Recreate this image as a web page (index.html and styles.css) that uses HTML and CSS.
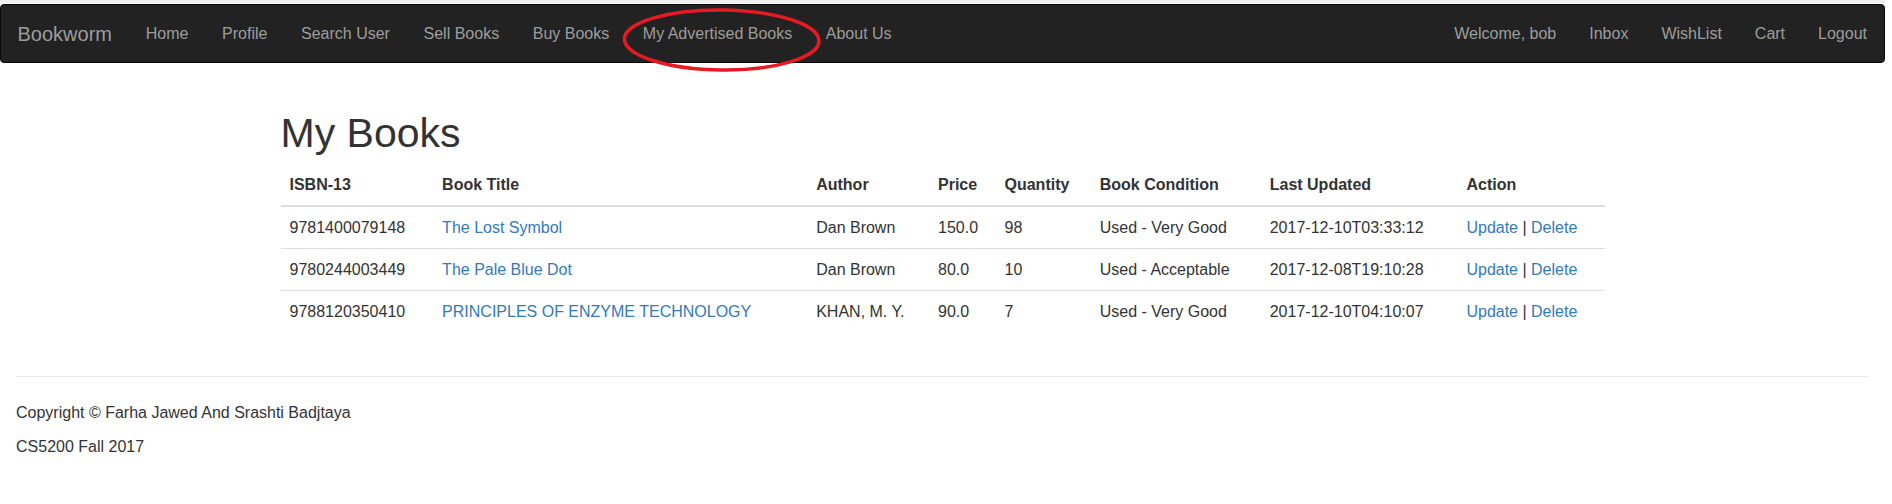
FILE: index.html
```html
<!DOCTYPE html>
<html lang="en">
<head>
<meta charset="utf-8">
<title>Bookworm - My Books</title>
<link rel="stylesheet" href="styles.css">
</head>
<body>
<nav class="navbar">
  <div class="nav-left">
    <a class="brand" href="#">Bookworm</a>
    <a class="nav-link" href="#">Home</a>
    <a class="nav-link" href="#">Profile</a>
    <a class="nav-link" href="#">Search User</a>
    <a class="nav-link" href="#">Sell Books</a>
    <a class="nav-link" href="#">Buy Books</a>
    <a class="nav-link" href="#">My Advertised Books</a>
    <a class="nav-link" href="#">About Us</a>
  </div>
  <div class="nav-right">
    <a class="nav-link" href="#">Welcome, bob</a>
    <a class="nav-link" href="#">Inbox</a>
    <a class="nav-link" href="#">WishList</a>
    <a class="nav-link" href="#">Cart</a>
    <a class="nav-link" href="#">Logout</a>
  </div>
</nav>

<svg class="annotation" width="206" height="70" viewBox="0 0 206 70" aria-hidden="true">
  <ellipse cx="101.7" cy="34" rx="97.3" ry="30" fill="none" stroke="#e51a22" stroke-width="3.5" transform="rotate(0.6 101.7 34)"/>
</svg>

<main class="container">
  <h1 class="title">My Books</h1>
  <table class="books">
    <colgroup>
      <col class="c-isbn">
      <col class="c-title">
      <col class="c-author">
      <col class="c-price">
      <col class="c-qty">
      <col class="c-cond">
      <col class="c-date">
      <col class="c-action">
    </colgroup>
    <thead>
      <tr>
        <th>ISBN-13</th>
        <th>Book Title</th>
        <th>Author</th>
        <th>Price</th>
        <th>Quantity</th>
        <th>Book Condition</th>
        <th>Last Updated</th>
        <th>Action</th>
      </tr>
    </thead>
    <tbody>
      <tr>
        <td>9781400079148</td>
        <td><a href="#">The Lost Symbol</a></td>
        <td>Dan Brown</td>
        <td>150.0</td>
        <td>98</td>
        <td>Used - Very Good</td>
        <td>2017-12-10T03:33:12</td>
        <td><a href="#">Update</a> | <a href="#">Delete</a></td>
      </tr>
      <tr>
        <td>9780244003449</td>
        <td><a href="#">The Pale Blue Dot</a></td>
        <td>Dan Brown</td>
        <td>80.0</td>
        <td>10</td>
        <td>Used - Acceptable</td>
        <td>2017-12-08T19:10:28</td>
        <td><a href="#">Update</a> | <a href="#">Delete</a></td>
      </tr>
      <tr>
        <td>9788120350410</td>
        <td><a href="#">PRINCIPLES OF ENZYME TECHNOLOGY</a></td>
        <td>KHAN, M. Y.</td>
        <td>90.0</td>
        <td>7</td>
        <td>Used - Very Good</td>
        <td>2017-12-10T04:10:07</td>
        <td><a href="#">Update</a> | <a href="#">Delete</a></td>
      </tr>
    </tbody>
  </table>
</main>

<footer class="footer">
  <hr class="rule">
  <p>Copyright © Farha Jawed And Srashti Badjtaya</p>
  <p>CS5200 Fall 2017</p>
</footer>
</body>
</html>
```

FILE: styles.css
```css
* {
  box-sizing: border-box;
}

html {
  background: #fff;
}

body {
  margin: 0 7px 0 0;
  border-top: 3px solid #efefef;
  padding-top: 1px;
  font-family: "Liberation Sans", Arial, Helvetica, sans-serif;
  font-size: 16px;
  line-height: 23px;
  color: #333;
  position: relative;
}

a {
  color: #337ab7;
  text-decoration: none;
}

/* Navbar */
.navbar {
  display: flex;
  justify-content: space-between;
  align-items: stretch;
  height: 59px;
  background: #222;
  border: 1px solid #080808;
  border-radius: 4px;
}

.nav-left,
.nav-right {
  display: flex;
  align-items: stretch;
}

.nav-right {
  padding-right: 0.5px;
}

.brand,
.nav-link {
  display: flex;
  align-items: center;
  color: #9d9d9d;
  line-height: 22px;
}

.nav-left .nav-link {
  padding: 0 16.8px;
}

.nav-right .nav-link {
  padding: 0 16.5px;
}

.brand {
  font-size: 20px;
  padding: 0 17px 0 16.5px;
}

.nav-link {
  font-size: 16px;
}

.annotation {
  position: absolute;
  left: 620px;
  top: 3px;
  pointer-events: none;
}

/* Main */
.container {
  width: 1324px;
  margin: 0 auto;
}

.title {
  margin: 48px 0 8px;
  font-size: 41px;
  line-height: 45px;
  font-weight: 500;
  color: #333;
}

.books {
  width: 100%;
  table-layout: fixed;
  border-collapse: collapse;
  border-spacing: 0;
}

.books th,
.books td {
  padding: 9px;
  line-height: 23px;
  text-align: left;
  vertical-align: top;
  white-space: nowrap;
}

.books th {
  font-weight: bold;
  border-bottom: 2px solid #ddd;
}

.books tbody tr + tr td {
  border-top: 1px solid #ddd;
}

.c-isbn { width: 152.6px; }
.c-title { width: 374px; }
.c-author { width: 121.8px; }
.c-price { width: 66.5px; }
.c-qty { width: 95.2px; }
.c-cond { width: 170px; }
.c-date { width: 196.7px; }
.c-action { width: 147px; }

/* Footer */
.footer {
  padding: 44px 17px 0 16px;
}

.rule {
  margin: 0;
  border: 0;
  border-top: 1px solid #e9e9e9;
  height: 0;
}

.footer p {
  margin: 0 0 10.5px;
  line-height: 23px;
}

.footer .rule + p {
  margin-top: 24px;
}
```
